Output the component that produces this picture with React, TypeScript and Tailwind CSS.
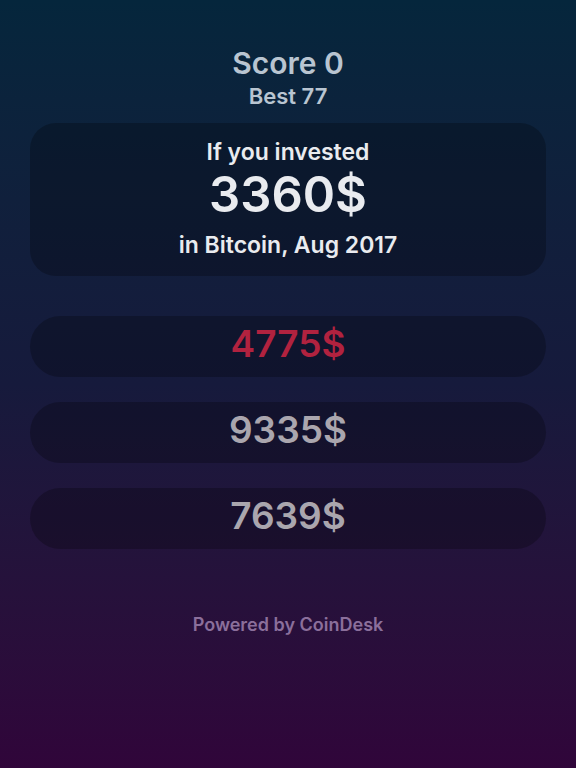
import React from "react";

export default function App() {
  const options = [
    { v: "4775$", c: "text-[#b1223f]" },
    { v: "9335$", c: "text-[#aaa6ae]" },
    { v: "7639$", c: "text-[#aaa6ae]" },
  ];
  return (
    <div
      className="w-[576px] h-[768px] bg-gradient-to-b from-[#05263c] via-[#161a3c] to-[#30053a] flex flex-col items-center"
      style={{ fontFamily: "Inter, 'Noto Sans', sans-serif" }}
    >
      <div className="mt-[44px] text-[30px] leading-[38px] font-semibold text-[#b9c5d1]">Score 0</div>
      <div className="mt-[-1px] text-[22px] leading-[30px] font-semibold text-[#b9c5d1]">Best 77</div>
      <div className="mt-[12px] w-[516px] h-[153px] rounded-[26px] bg-black/25 flex flex-col items-center pt-[14px]">
        <div className="text-[23px] leading-[30px] font-semibold text-[#e9ebef]">If you invested</div>
        <div className="mt-[-1px] text-[49px] leading-[58px] font-semibold text-[#e9ebef]">3360$</div>
        <div className="mt-[6px] text-[23px] leading-[30px] font-semibold text-[#e9ebef]">in Bitcoin, Aug 2017</div>
      </div>
      <div className="mt-[40px] flex flex-col gap-[25px]">
        {options.map((o) => (
          <div
            key={o.v}
            className={`w-[516px] h-[61px] rounded-full bg-black/25 flex items-center justify-center pb-[5px] text-[37px] font-semibold ${o.c}`}
          >
            {o.v}
          </div>
        ))}
      </div>
      <div className="mt-[64px] text-[18px] leading-[24px] font-semibold text-[#8b6f9b]">Powered by CoinDesk</div>
    </div>
  );
}
